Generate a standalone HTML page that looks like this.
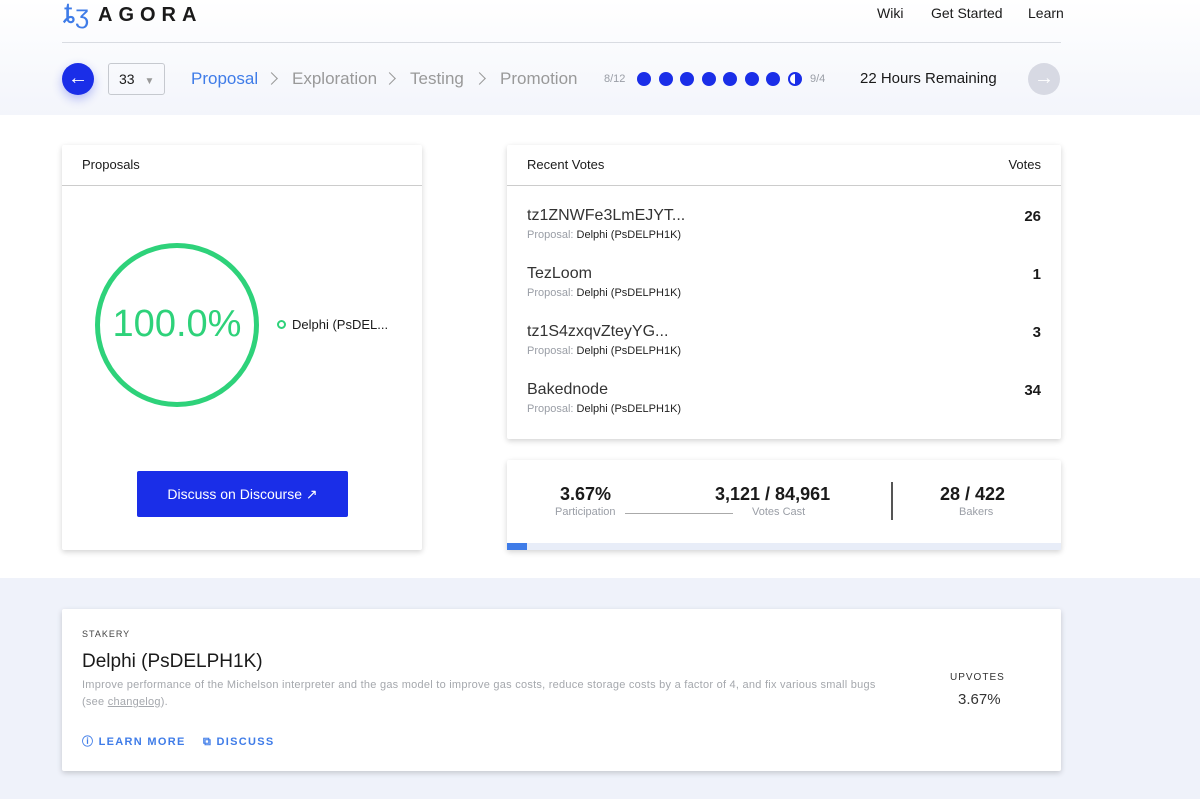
<!DOCTYPE html>
<html><head><meta charset="utf-8"><style>
*{margin:0;padding:0;box-sizing:border-box}
body{width:1200px;height:799px;overflow:hidden;font-family:"Liberation Sans",Arial,sans-serif;background:#fff;position:relative;color:#1a1a1a}
.top{position:absolute;left:0;top:0;width:1200px;height:115px;background:linear-gradient(#fff,#f3f5fb)}
.bot{position:absolute;left:0;top:578px;width:1200px;height:221px;background:#eff2fa}
.a{position:absolute}
.card{position:absolute;background:#fff;box-shadow:0 2px 6px rgba(0,0,0,.18);border-radius:2px}
.g{color:#9a9ea6}
.dot{display:inline-block;width:14px;height:14px;border-radius:50%;background:#1a2ee8;margin-right:7.5px}
.bc{position:absolute;top:69px;font-size:17px;color:#999}
.ch{position:absolute;top:71px;width:9px;height:9px;border-top:1.5px solid #999;border-right:1.5px solid #999;transform:rotate(45deg)}
</style></head><body>
<div class="top"></div><div class="bot"></div>
<div class="a" style="left:64px;top:0;font-size:30px;color:#3f7ce8;line-height:28px">ȶ<span style="font-size:26px">ʒ</span></div>
<div class="a" style="left:98px;top:4px;font-size:20px;font-weight:bold;letter-spacing:6px">AGORA</div>
<div class="a" style="left:877px;top:5px;font-size:14px">Wiki</div>
<div class="a" style="left:931px;top:5px;font-size:14px">Get Started</div>
<div class="a" style="left:1028px;top:5px;font-size:14px">Learn</div>
<div class="a" style="left:62px;top:42px;width:999px;height:1px;background:#d9dce2"></div>
<div class="a" style="left:62px;top:63px;width:32px;height:32px;border-radius:50%;background:#1a2ee8;color:#fff;text-align:center;font-size:20px;line-height:31px;box-shadow:0 4px 10px rgba(26,46,232,.3)">←</div>
<div class="a" style="left:108px;top:63px;width:57px;height:32px;border:1px solid #c6c9cf;border-radius:3px;font-size:14px;line-height:30px;padding-left:10px">33 <span style="color:#999;font-size:10px;margin-left:6px">▼</span></div>
<div class="bc" style="left:191px;color:#3f7ce8">Proposal</div>
<div class="ch" style="left:267px;top:74px"></div>
<div class="bc" style="left:292px">Exploration</div>
<div class="ch" style="left:385px;top:74px"></div>
<div class="bc" style="left:410px">Testing</div>
<div class="ch" style="left:475px;top:74px"></div>
<div class="bc" style="left:500px">Promotion</div>
<div class="a" style="left:604px;top:73px;font-size:11px" ><span class="g">8/12</span></div>
<div class="a" style="left:637px;top:72px;height:14px;display:flex">
<span class="dot"></span><span class="dot"></span><span class="dot"></span><span class="dot"></span><span class="dot"></span><span class="dot"></span><span class="dot"></span><span class="dot" style="background:linear-gradient(90deg,#fff 50%,#1a2ee8 50%);border:2px solid #1a2ee8"></span></div>
<div class="a g" style="left:810px;top:73px;font-size:11px">9/4</div>
<div class="a" style="left:860px;top:70px;font-size:15px">22 Hours Remaining</div>
<div class="a" style="left:1028px;top:63px;width:32px;height:32px;border-radius:50%;background:#d7d9e3;color:#fff;text-align:center;font-size:20px;line-height:31px">→</div>

<div class="card" style="left:62px;top:145px;width:360px;height:405px">
<div style="height:41px;border-bottom:1px solid #ccc;padding:12px 20px;font-size:13px">Proposals</div>
<div class="a" style="left:33px;top:98px;width:164px;height:164px;border:5px solid #2ed27a;border-radius:50%;text-align:center;line-height:152px;font-size:38px;color:#2ed27a">100.0%</div>
<div class="a" style="left:215px;top:175px;width:9px;height:9px;border:2px solid #2ed27a;border-radius:50%"></div>
<div class="a" style="left:230px;top:172px;font-size:13px">Delphi (PsDEL...</div>
<div class="a" style="left:75px;top:326px;width:211px;height:46px;background:#1a2ee8;color:#fff;font-size:14px;text-align:center;line-height:46px;border-radius:2px">Discuss on Discourse ↗</div>
</div>

<div class="card" style="left:507px;top:145px;width:554px;height:294px">
<div style="height:41px;border-bottom:1px solid #ccc;padding:12px 20px;font-size:13px;display:flex;justify-content:space-between"><span>Recent Votes</span><span>Votes</span></div>
<div style="padding:21px 20px 0">
<div style="position:relative;height:58px"><div style="font-size:16px;color:#333">tz1ZNWFe3LmEJYT...</div><div style="font-size:11px;color:#222;margin-top:4px"><span class="g">Proposal:</span> Delphi (PsDELPH1K)</div><b style="position:absolute;right:0;top:1px;font-size:15px">26</b></div>
<div style="position:relative;height:58px"><div style="font-size:16px;color:#333">TezLoom</div><div style="font-size:11px;color:#222;margin-top:4px"><span class="g">Proposal:</span> Delphi (PsDELPH1K)</div><b style="position:absolute;right:0;top:1px;font-size:15px">1</b></div>
<div style="position:relative;height:58px"><div style="font-size:16px;color:#333">tz1S4zxqvZteyYG...</div><div style="font-size:11px;color:#222;margin-top:4px"><span class="g">Proposal:</span> Delphi (PsDELPH1K)</div><b style="position:absolute;right:0;top:1px;font-size:15px">3</b></div>
<div style="position:relative;height:58px"><div style="font-size:16px;color:#333">Bakednode</div><div style="font-size:11px;color:#222;margin-top:4px"><span class="g">Proposal:</span> Delphi (PsDELPH1K)</div><b style="position:absolute;right:0;top:1px;font-size:15px">34</b></div>
</div></div>

<div class="card" style="left:507px;top:460px;width:554px;height:90px">
<b class="a" style="left:53px;top:24px;font-size:18px">3.67%</b>
<div class="a g" style="left:48px;top:46px;font-size:11px">Participation</div>
<div class="a" style="left:118px;top:53px;width:108px;height:1px;background:#aaa"></div>
<b class="a" style="left:208px;top:24px;font-size:18px">3,121 / 84,961</b>
<div class="a g" style="left:245px;top:46px;font-size:11px">Votes Cast</div>
<div class="a" style="left:384px;top:22px;width:2px;height:38px;background:#555"></div>
<b class="a" style="left:433px;top:24px;font-size:18px">28 / 422</b>
<div class="a g" style="left:452px;top:46px;font-size:11px">Bakers</div>
<div class="a" style="left:0;top:83px;width:554px;height:7px;background:#e8edf8"></div>
<div class="a" style="left:0;top:83px;width:20px;height:7px;background:#3f7ce8"></div>
</div>

<div class="card" style="left:62px;top:609px;width:999px;height:162px">
<div class="a" style="left:20px;top:20px;font-size:9px;letter-spacing:1px;color:#444">STAKERY</div>
<div class="a" style="left:20px;top:42px;font-size:19px">Delphi (PsDELPH1K)</div>
<div class="a" style="left:20px;top:68px;width:880px;font-size:11px;line-height:17px;color:#a5a8ad;letter-spacing:.25px;white-space:nowrap">Improve performance of the Michelson interpreter and the gas model to improve gas costs, reduce storage costs by a factor of 4, and fix various small bugs<br>(see <u>changelog</u>).</div>
<div class="a" style="left:20px;top:124px;font-size:11px;font-weight:bold;letter-spacing:1.3px;color:#3f7ce8">ⓘ LEARN MORE &nbsp;&nbsp;&nbsp;⧉ DISCUSS</div>
<div class="a" style="left:888px;top:63px;font-size:10px;letter-spacing:1px;color:#333">UPVOTES</div>
<div class="a" style="left:896px;top:82px;font-size:15px;color:#333">3.67%</div>
</div>
</body></html>
